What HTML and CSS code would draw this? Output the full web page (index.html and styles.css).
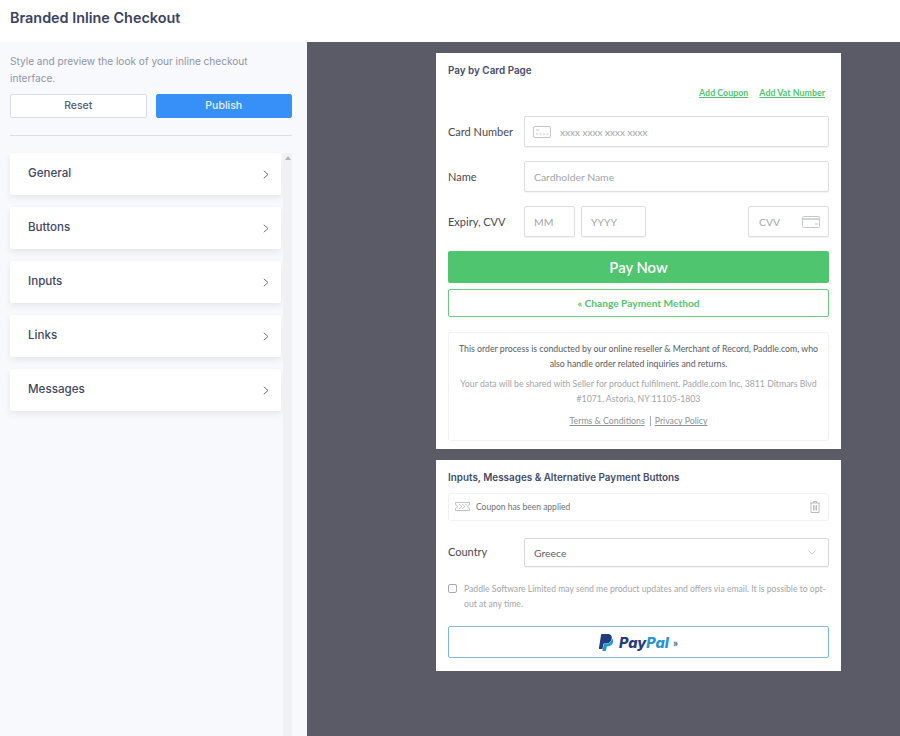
FILE: index.html
```html
<!DOCTYPE html>
<html lang="en">
<head>
    <meta charset="UTF-8">
    <meta name="viewport" content="width=device-width, initial-scale=1.0">
    <title>Branded Inline Checkout</title>
    <link rel="stylesheet" href="styles.css">
</head>
<body>
    <header class="page-header">
        <h1>Branded Inline Checkout</h1>
    </header>
    <div class="page-body">
        <aside class="sidebar">
            <p class="intro">Style and preview the look of your inline checkout interface.</p>
            <div class="actions">
                <button class="btn btn-reset">Reset</button>
                <button class="btn btn-publish">Publish</button>
            </div>
            <hr class="divider">
            <div class="accordion-wrap">
                <div class="accordion">
                    <div class="accordion-item"><span>General</span><svg class="chevron" viewBox="0 0 6 9"><path d="M.8.8 5 4.5.8 8.2"/></svg></div>
                    <div class="accordion-item"><span>Buttons</span><svg class="chevron" viewBox="0 0 6 9"><path d="M.8.8 5 4.5.8 8.2"/></svg></div>
                    <div class="accordion-item"><span>Inputs</span><svg class="chevron" viewBox="0 0 6 9"><path d="M.8.8 5 4.5.8 8.2"/></svg></div>
                    <div class="accordion-item"><span>Links</span><svg class="chevron" viewBox="0 0 6 9"><path d="M.8.8 5 4.5.8 8.2"/></svg></div>
                    <div class="accordion-item"><span>Messages</span><svg class="chevron" viewBox="0 0 6 9"><path d="M.8.8 5 4.5.8 8.2"/></svg></div>
                </div>
                <div class="scrollbar"><div class="scroll-up"></div></div>
            </div>
        </aside>
        <main class="preview">
            <section class="card card-pay">
                <h2>Pay by Card Page</h2>
                <div class="links">
                    <a href="#">Add Coupon</a>
                    <a href="#">Add Vat Number</a>
                </div>
                <div class="field-row">
                    <label>Card Number</label>
                    <div class="input input-grow">
                        <svg class="icon-card" viewBox="0 0 18 12"><rect x=".5" y=".5" width="17" height="11" rx="1.5"/><path d="M3 4h3M3 8h2M6.500 8h2M10 8h2M13.500 8h2"/></svg>
                        <span class="card-placeholder">xxxx xxxx xxxx xxxx</span>
                    </div>
                </div>
                <div class="field-row">
                    <label>Name</label>
                    <div class="input input-grow">Cardholder Name</div>
                </div>
                <div class="field-row">
                    <label>Expiry, CVV</label>
                    <div class="input input-mm">MM</div>
                    <div class="input input-yyyy">YYYY</div>
                    <div class="input input-cvv">
                        <span>CVV</span>
                        <svg class="icon-cvv" viewBox="0 0 18 12"><rect x=".5" y=".5" width="17" height="11" rx="1"/><path d="M.5 3h17" stroke-width="1.500"/><path d="M13 8h2.500"/></svg>
                    </div>
                </div>
                <button class="pay-now">Pay Now</button>
                <button class="change-method">&laquo; Change Payment Method</button>
                <div class="terms">
                    <p class="terms-main">This order process is conducted by our online reseller &amp; Merchant of Record, Paddle.com, who also handle order related inquiries and returns.</p>
                    <p class="terms-sub">Your data will be shared with Seller for product fulfilment. Paddle.com Inc, 3811 Ditmars Blvd #1071, Astoria, NY 11105-1803</p>
                    <p class="terms-links"><a href="#">Terms &amp; Conditions</a><span class="sep"></span><a href="#">Privacy Policy</a></p>
                </div>
            </section>
            <section class="card card-alt">
                <h2>Inputs, Messages &amp; Alternative Payment Buttons</h2>
                <div class="coupon">
                    <svg class="icon-coupon" viewBox="0 0 15 9"><path d="M.5.5h14v2.200a1.800 1.800 0 0 0 0 3.600v2.200H.5V6.300a1.800 1.800 0 0 0 0-3.600z"/><path d="M4 2l3 2.500L4 7M7 2l3 2.500L7 7M10 2l2 1.500"/></svg>
                    <span>Coupon has been applied</span>
                    <svg class="icon-trash" viewBox="0 0 10 12"><path d="M0 2h10M3.500 2V.5h3V2M1 2v9.500h8V2M3.500 4v5.500M5 4v5.500M6.500 4v5.500"/></svg>
                </div>
                <div class="field-row country-row">
                    <label>Country</label>
                    <div class="input input-grow select">
                        <span>Greece</span>
                        <svg class="icon-down" viewBox="0 0 10 6"><path d="M.5.5 5 5 9.500.5"/></svg>
                    </div>
                </div>
                <div class="consent">
                    <span class="checkbox"></span>
                    <p>Paddle Software Limited may send me product updates and offers via email. It is possible to opt-out at any time.</p>
                </div>
                <button class="paypal">
                    <svg class="paypal-mark" viewBox="2 0 20 24"><path fill="#253b80" d="M7.076 21.337H2.470a.641.641 0 0 1-.633-.740L4.944.901C5.026.382 5.474 0 5.998 0h7.460c2.570 0 4.578.543 5.690 1.810 1.010 1.150 1.304 2.420 1.012 4.287-.023.143-.047.288-.077.437-.983 5.050-4.349 6.797-8.647 6.797h-2.190c-.524 0-.968.382-1.050.900l-1.120 7.106z"/><path fill="#179bd7" d="M21.222 6.917a3.350 3.350 0 0 0-.607-.541c-.013.076-.026.175-.041.254-.930 4.778-4.005 7.201-9.138 7.201h-2.190a.563.563 0 0 0-.556.479l-1.187 7.527h-.506l-.240 1.516a.560.560 0 0 0 .554.647h3.882c.460 0 .850-.334.922-.788.060-.260.760-4.852.816-5.090a.932.932 0 0 1 .923-.788h.580c3.760 0 6.705-1.528 7.565-5.946.360-1.847.174-3.388-.777-4.471z"/></svg>
                    <span class="paypal-text"><span class="pay">Pay</span><span class="pal">Pal</span></span>
                    <span class="paypal-arrow">&raquo;</span>
                </button>
            </section>
        </main>
    </div>
</body>
</html>
```
FILE: styles.css
```css
* {
    box-sizing: border-box;
}
html, body {
    height: 100%;
}
body {
    margin: 0;
    overflow: hidden;
    font-family: Inter, 'Liberation Sans', sans-serif;
    color: #333c5e;
    background: #fff;
    display: flex;
    flex-direction: column;
}
.page-header {
    height: 42px;
    flex: none;
    padding: 0 10px;
    display: flex;
    align-items: center;
}
.page-header h1 {
    margin: 0 0 7px;
    font-size: 14.400px;
    font-weight: 600;
    color: #3a4264;
}
.page-body {
    flex: 1;
    display: flex;
    min-height: 0;
}

/* Sidebar */
.sidebar {
    width: 307px;
    flex: none;
    padding: 10px 15px 0 10px;
    background: #f8f9fc;
    display: flex;
    flex-direction: column;
}
.intro {
    margin: 0;
    padding-top: 1px;
    font-size: 10.100px;
    line-height: 17px;
    color: #8f94a8;
}
.actions {
    display: flex;
    gap: 9px;
    margin-top: 7px;
}
.btn {
    flex: 1;
    height: 24px;
    padding: 0 0 2px;
    font-family: inherit;
    font-size: 10.500px;
    font-weight: 500;
    border-radius: 2px;
    border: 1px solid #dcdee6;
    background: #fff;
    color: #565d78;
}
.btn-publish {
    background: #3790f8;
    border-color: #3790f8;
    color: #e9f3ff;
}
.divider {
    width: 100%;
    margin: 17px 0 17px;
    border: 0;
    border-top: 1px solid #dcdfe6;
}
.accordion-wrap {
    flex: 1;
    display: flex;
    gap: 2px;
    min-height: 0;
}
.accordion {
    width: 271px;
    flex: none;
    display: flex;
    flex-direction: column;
    gap: 12px;
}
.accordion-item {
    height: 42px;
    padding: 0 12px 2px 18px;
    background: #fff;
    border-radius: 2px;
    box-shadow: 0 3px 6px rgba(50, 55, 80, 0.09);
    display: flex;
    align-items: center;
    justify-content: space-between;
    font-size: 11.600px;
    font-weight: 500;
    color: #3f4664;
}
.chevron {
    width: 6px;
    height: 9px;
    margin-top: 3px;
    fill: none;
    stroke: #5f6478;
    stroke-width: 0.9;
}
.scrollbar {
    width: 9px;
    background: #f1f1f4;
}
.scroll-up {
    width: 0;
    margin: 3px auto 0;
    border: 3px solid transparent;
    border-top: 0;
    border-bottom: 4px solid #b4b6be;
}

/* Checkout preview */
.preview {
    flex: 1;
    background: #5a5b66;
    padding: 11px 59px 0 129px;
    display: flex;
    flex-direction: column;
    gap: 11px;
    font-family: Lato, 'Liberation Sans', sans-serif;
}
.card {
    width: 405px;
    background: #fff;
    padding: 11px 12px 0 12px;
}
.card-pay {
    height: 396px;
}
.card-alt {
    height: 211px;
}
.card h2 {
    margin: 0;
    font-family: Inter, 'Liberation Sans', sans-serif;
    font-size: 9.900px;
    line-height: 12px;
    font-weight: 600;
    color: #444b69;
}
.links {
    display: flex;
    justify-content: flex-end;
    gap: 11px;
    margin-top: 10px;
    padding-right: 4px;
    height: 17px;
    line-height: 13px;
}
.links a {
    font-size: 8.900px;
    font-weight: 700;
    color: #4fc56f;
}
.field-row {
    display: flex;
    align-items: center;
    height: 31px;
    margin-bottom: 14px;
}
.card-pay .links + .field-row {
    margin-top: 13px;
}
.field-row label {
    width: 76px;
    flex: none;
    font-size: 11px;
    color: #47494f;
}
.input {
    height: 100%;
    padding: 0 9px;
    display: flex;
    align-items: center;
    font-size: 10.400px;
    color: #a3a5aa;
    background: #fff;
    border: 1px solid #dcdee2;
    border-radius: 2px;
    box-shadow: 0 1px 1px rgba(0, 0, 0, 0.05);
}
.input-grow {
    flex: 1;
}
.input-mm {
    width: 51px;
}
.input-yyyy {
    width: 65px;
    margin-left: 6px;
}
.input-cvv {
    width: 81px;
    margin-left: auto;
    justify-content: space-between;
    padding: 0 8px 0 10px;
}
.icon-card, .icon-cvv {
    width: 18px;
    height: 12px;
    fill: none;
    stroke: #c4c6cb;
    stroke-width: 1;
}
.icon-card {
    margin-left: -1px;
}
.card-placeholder {
    margin-left: 9px;
    font-size: 10px;
    color: #a3a5aa;
}
.pay-now {
    display: block;
    width: 100%;
    height: 32px;
    padding: 0;
    border: 0;
    border-radius: 2px;
    background: #4fc56f;
    color: #fff;
    font-family: inherit;
    font-size: 14.800px;
    font-weight: 600;
}
.change-method {
    display: block;
    width: 100%;
    height: 28px;
    margin-top: 6px;
    padding: 0;
    background: #fff;
    border: 1px solid #68cc85;
    border-radius: 2px;
    color: #4fc56f;
    font-family: inherit;
    font-size: 10.200px;
    font-weight: 700;
}
.terms {
    margin-top: 15px;
    height: 109px;
    padding: 8px 8px 0;
    border: 1px solid #f1f1f3;
    border-radius: 3px;
    text-align: center;
    font-size: 8.750px;
    line-height: 15px;
}
.terms p {
    margin: 0;
}
.terms-main {
    color: #585a60;
}
.terms .terms-sub {
    margin-top: 5px;
    color: #a3a5aa;
}
.terms .terms-links {
    margin-top: 7px;
    display: flex;
    justify-content: center;
    align-items: center;
}
.terms-links a {
    color: #8f9197;
}
.sep {
    width: 1px;
    height: 10px;
    margin: 0 4px 0 5px;
    background: #a9abb0;
}
.coupon {
    margin-top: 10px;
    height: 28px;
    padding: 0 8px 1px 6px;
    display: flex;
    align-items: center;
    border: 1px solid #f1f1f3;
    border-radius: 3px;
    font-size: 8.500px;
    color: #6e7076;
}
.icon-coupon {
    width: 15px;
    height: 9px;
    margin-right: 6px;
    fill: none;
    stroke: #a9abb0;
    stroke-width: 0.7;
}
.icon-trash {
    width: 10px;
    height: 12px;
    margin-left: auto;
    fill: none;
    stroke: #a9abb0;
    stroke-width: 0.8;
}
.country-row {
    margin-top: 17px;
    height: 29px;
    margin-bottom: 0;
}
.country-row label {
    padding-bottom: 2px;
}
.select {
    justify-content: space-between;
    color: #5e6066;
    padding-right: 12px;
    border-color: #d6d8dc;
}
.icon-down {
    width: 8px;
    height: 5px;
    fill: none;
    stroke: #b6b8bd;
    stroke-width: 0.9;
}
.consent {
    display: flex;
    margin-top: 14px;
    font-size: 8.650px;
    line-height: 15px;
    color: #a3a5aa;
}
.consent p {
    margin: 0;
    flex: 1;
}
.checkbox {
    width: 9px;
    height: 9px;
    flex: none;
    margin: 3px 7px 0 0;
    border: 1px solid #a9abb0;
    border-radius: 2px;
}
.paypal {
    width: 100%;
    height: 32px;
    margin-top: 15px;
    padding: 0;
    background: #fff;
    border: 1px solid #7fb9d9;
    border-radius: 2px;
    display: flex;
    align-items: center;
    justify-content: center;
}
.paypal-mark {
    width: 14px;
    height: 17px;
    margin: 0 6px 0 0;
}
.paypal-text {
    font-family: Inter, sans-serif;
    font-size: 14.500px;
    font-weight: 800;
    font-style: italic;
}
.pay {
    color: #253b80;
}
.pal {
    color: #2a93d8;
}
.paypal-arrow {
    margin-left: 4px;
    font-family: Lato, sans-serif;
    font-size: 11px;
    font-weight: 700;
    color: #50608f;
}
```
